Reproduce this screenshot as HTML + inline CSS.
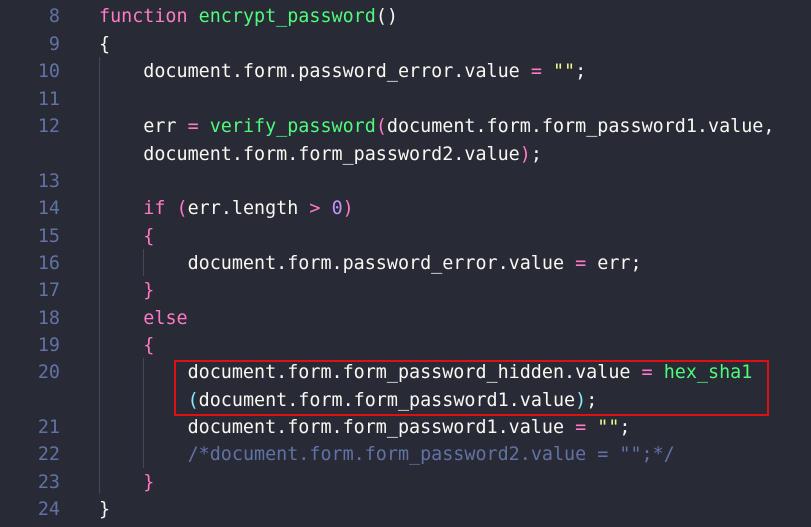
<!DOCTYPE html>
<html><head><style>
html,body{margin:0;padding:0;background:#282a36;width:811px;height:527px;overflow:hidden}
.r{position:absolute;left:0;height:27.4px;line-height:27.4px;font-family:"DejaVu Sans Mono",monospace;font-size:18.4px;color:#f8f8f2;white-space:pre}
.n{position:absolute;right:751px;color:#6272a4;text-align:right}
.c{position:absolute;left:99px}
.k{color:#ff79c6}.g{color:#50fa7b}.p{color:#bd93f9}.y{color:#f1fa8c}.m{color:#6272a4}.cy{color:#8be9fd}
.gd{position:absolute;width:1px;background:#44475a}
.box{position:absolute;left:174px;top:360px;width:591px;height:52px;border:2px solid #e01010}
</style></head><body>
<div class="gd" style="left:99px;top:57px;height:437px"></div>
<div class="gd" style="left:143px;top:249px;height:27px"></div>
<div class="gd" style="left:143px;top:358px;height:110px"></div>
<div class="r" style="top:3px;width:811px"><span class="n">8</span><span class="c"><span class="k">function</span> <span class="g">encrypt_password</span>()</span></div>
<div class="r" style="top:30.5px;width:811px"><span class="n">9</span><span class="c">{</span></div>
<div class="r" style="top:58px;width:811px"><span class="n">10</span><span class="c">    document.form.password_error.value <span class="k">=</span> <span class="y">""</span>;</span></div>
<div class="r" style="top:85.5px;width:811px"><span class="n">11</span></div>
<div class="r" style="top:113px;width:811px"><span class="n">12</span><span class="c">    err <span class="k">=</span> <span class="g">verify_password</span><span class="k">(</span>document.form.form_password1.value,</span></div>
<div class="r" style="top:140.5px;width:811px"><span class="c">    document.form.form_password2.value<span class="k">)</span>;</span></div>
<div class="r" style="top:168px;width:811px"><span class="n">13</span></div>
<div class="r" style="top:195px;width:811px"><span class="n">14</span><span class="c">    <span class="k">if</span> <span class="k">(</span>err.length <span class="k">&gt;</span> <span class="p">0</span><span class="k">)</span></span></div>
<div class="r" style="top:222.5px;width:811px"><span class="n">15</span><span class="c">    <span class="k">{</span></span></div>
<div class="r" style="top:250px;width:811px"><span class="n">16</span><span class="c">        document.form.password_error.value <span class="k">=</span> err;</span></div>
<div class="r" style="top:277px;width:811px"><span class="n">17</span><span class="c">    <span class="k">}</span></span></div>
<div class="r" style="top:304.5px;width:811px"><span class="n">18</span><span class="c">    <span class="k">else</span></span></div>
<div class="r" style="top:332px;width:811px"><span class="n">19</span><span class="c">    <span class="k">{</span></span></div>
<div class="r" style="top:359px;width:811px"><span class="n">20</span><span class="c">        document.form.form_password_hidden.value <span class="k">=</span> <span class="g">hex_sha1</span></span></div>
<div class="r" style="top:386.5px;width:811px"><span class="c">        <span class="cy">(</span>document.form.form_password1.value<span class="cy">)</span>;</span></div>
<div class="r" style="top:414px;width:811px"><span class="n">21</span><span class="c">        document.form.form_password1.value <span class="k">=</span> <span class="y">""</span>;</span></div>
<div class="r" style="top:441px;width:811px"><span class="n">22</span><span class="c">        <span class="m">/*document.form.form_password2.value = "";*/</span></span></div>
<div class="r" style="top:468.5px;width:811px"><span class="n">23</span><span class="c">    <span class="k">}</span></span></div>
<div class="r" style="top:496px;width:811px"><span class="n">24</span><span class="c">}</span></div>
<div class="box"></div>
</body></html>
